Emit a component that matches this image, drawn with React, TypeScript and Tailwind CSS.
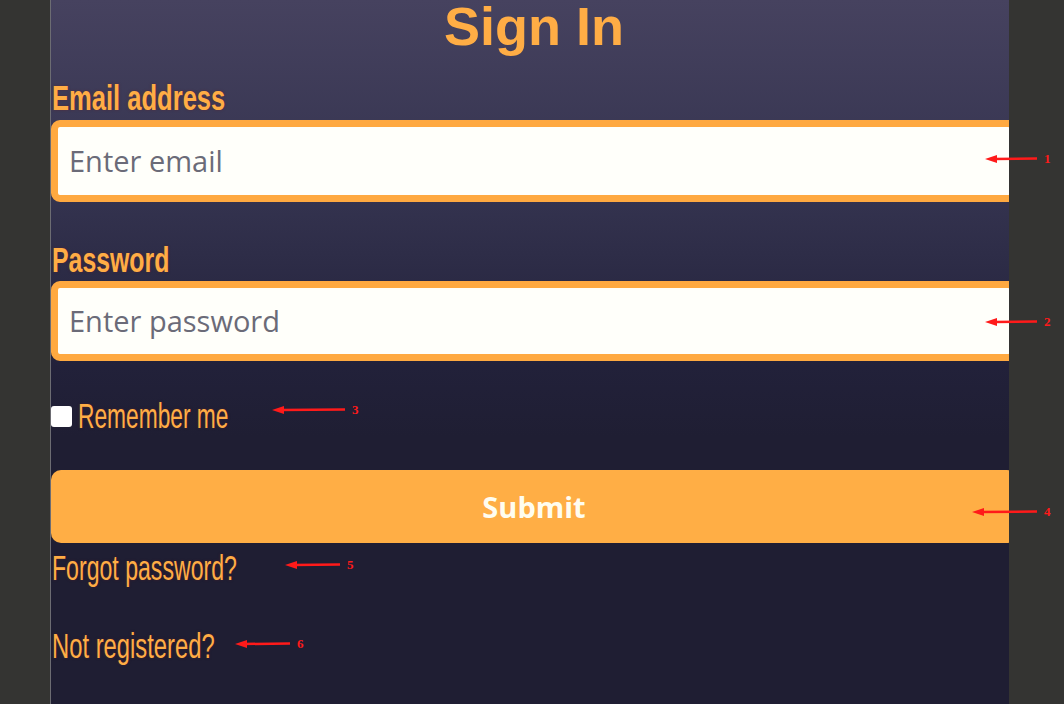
const ORANGE = 'text-[#ffad45]';

function Arrow({ len, label, className }: { len: number; label: string; className: string }) {
  return (
    <div className={`absolute flex items-center ${className}`}>
      <svg width={len} height="10" viewBox={`0 0 ${len} 10`}>
        <line x1="8" y1="5" x2={len} y2="4.5" stroke="#ff1a1a" strokeWidth="2.5" />
        <polygon points="0,5 12,1 12,9" fill="#ff1a1a" />
      </svg>
      <span className="ml-[7px] font-['Liberation_Serif',serif] text-[13px] font-bold leading-none text-[#ff1a1a]">{label}</span>
    </div>
  );
}

// condensed display text: Liberation Sans squeezed horizontally
function Narrow({ children, bold, scale }: { children: string; bold?: boolean; scale: string }) {
  return (
    <span
      className={`inline-block origin-left whitespace-nowrap font-['Liberation_Sans',sans-serif] text-[35px] leading-[34px] ${scale} ${bold ? 'font-bold' : ''} ${ORANGE} [text-shadow:0_0_3px_rgba(110,30,30,0.5)]`}
    >
      {children}
    </span>
  );
}

export default function App() {
  return (
    <div className="relative flex h-[704px] w-[1064px] overflow-hidden bg-[#343432]">
      <div className="w-[51px] shrink-0 border-r border-[#6c6c72] bg-[#343432]" />
      <main className="flex-1 overflow-hidden bg-[linear-gradient(180deg,#46425f_0%,#34334f_28%,#22213a_52%,#1f1e33_62%,#1f1e33_100%)]">
        <div className="flex w-[966px] flex-col">
          <h1 className={`text-center font-['Liberation_Sans',sans-serif] text-[54px] font-bold leading-[52px] ${ORANGE}`}>
            Sign In
          </h1>
          <label className="mt-[29px] ml-[1px] h-[34px]">
            <Narrow bold scale="scale-x-[0.73]">Email address</Narrow>
          </label>
          <div className="mt-[5px] flex h-[82px] items-center rounded-[9px] border-[7px] border-[#ffa940] bg-[#fffffa] px-[11px]">
            <span className="font-['Open_Sans',sans-serif] text-[29px] text-[#6b6b78]">Enter email</span>
          </div>
          <label className="mt-[41px] ml-[1px] h-[34px]">
            <Narrow bold scale="scale-x-[0.71]">Password</Narrow>
          </label>
          <div className="mt-[4px] flex h-[80px] items-center rounded-[9px] border-[7px] border-[#ffa940] bg-[#fffffa] px-[11px]">
            <span className="font-['Open_Sans',sans-serif] text-[29px] text-[#6b6b78]">Enter password</span>
          </div>
          <div className="mt-[38px] flex h-[34px] items-center">
            <span className="h-[21px] w-[21px] shrink-0 rounded-[3px] bg-white" />
            <span className="ml-[6px]">
              <Narrow scale="scale-x-[0.65]">Remember me</Narrow>
            </span>
          </div>
          <button className="mt-[37px] h-[73px] rounded-[10px] bg-[#ffae45] font-['Open_Sans',sans-serif] text-[29px] font-bold text-[#fffdf0]">
            Submit
          </button>
          <a className="mt-[8px] ml-[1px] h-[34px]">
            <Narrow scale="scale-x-[0.66]">Forgot password?</Narrow>
          </a>
          <a className="mt-[44px] ml-[1px] h-[34px]">
            <Narrow scale="scale-x-[0.68]">Not registered?</Narrow>
          </a>
        </div>
      </main>
      <div className="w-[55px] shrink-0 bg-[#343432]" />
      <Arrow len={52} label="1" className="left-[985px] top-[152px]" />
      <Arrow len={52} label="2" className="left-[985px] top-[315px]" />
      <Arrow len={73} label="3" className="left-[272px] top-[403px]" />
      <Arrow len={65} label="4" className="left-[972px] top-[505px]" />
      <Arrow len={55} label="5" className="left-[285px] top-[558px]" />
      <Arrow len={55} label="6" className="left-[235px] top-[637px]" />
    </div>
  );
}
